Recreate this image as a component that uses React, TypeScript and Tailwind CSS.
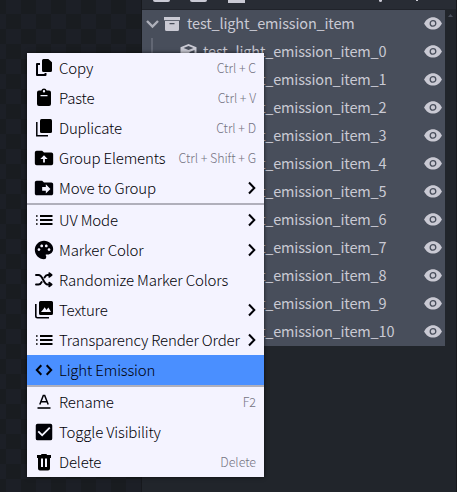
import type { ReactNode } from "react";
import { MdDriveFileMove, MdPalette, MdCheckBox } from "react-icons/md";

function CopyIcon() {
  return (
    <svg width="18" height="20" viewBox="0 0 18 20">
      <path d="M8.500 1h4.800L17 4.300v8.200a1.500 1.500 0 0 1-1.500 1.500h-7A1.500 1.500 0 0 1 7 12.500v-10A1.500 1.500 0 0 1 8.500 1z" />
      <path d="M5 6H2v11h8.500v-2" fill="none" stroke="currentColor" strokeWidth="2" strokeLinejoin="round" />
    </svg>
  );
}
function PasteIcon() {
  return (
    <svg width="18" height="20" viewBox="0 0 18 20">
      <path fillRule="evenodd" d="M6.300 2.500a2.800 2.800 0 0 1 5.400 0h2.300a2 2 0 0 1 2 2V16a2 2 0 0 1-2 2H4a2 2 0 0 1-2-2V4.500a2 2 0 0 1 2-2zM9 2a1.200 1.200 0 1 0 0 2.400A1.200 1.200 0 0 0 9 2zM5.500 7v1.300h7V7z" />
    </svg>
  );
}
function DuplicateIcon() {
  return (
    <svg width="18" height="20" viewBox="0 0 18 20">
      <rect x="5" y="1" width="12" height="14" rx="1.500" />
      <path d="M1.800 4v13.800H13" fill="none" stroke="currentColor" strokeWidth="1.500" />
    </svg>
  );
}
function FolderUpIcon() {
  return (
    <svg className="shrink-0" width="22" height="22" viewBox="0 0 24 24">
      <path fillRule="evenodd" d="M4 4h6l2 2h8a2 2 0 0 1 2 2v10a2 2 0 0 1-2 2H4a2 2 0 0 1-2-2V6a2 2 0 0 1 2-2zM12 9l-4 4h3v4h2v-4h3z" />
    </svg>
  );
}
function ListIcon() {
  return (
    <svg width="18" height="12" viewBox="0 0 18 12">
      <path d="M5 1h12.500v2H5zM5 5h12.500v2H5zM5 9h12.500v2H5zM1 1.200h1.600v1.600H1zM1 5.200h1.600v1.600H1zM1 9.200h1.600v1.600H1z" />
    </svg>
  );
}
function ShuffleIcon() {
  return (
    <svg width="18" height="18" viewBox="0 0 18 18" fill="none" stroke="currentColor" strokeWidth="1.900" strokeLinecap="round" strokeLinejoin="round">
      <path d="M1 4h2.500c4.500 0 5 9.500 9 9.500H16M1 13.500h2.500c1.500 0 2.500-1 3.200-2.500M9.500 6.500C10.300 5 11 4 12.500 4H16M14.300 2.200 16.600 4l-2.300 1.800M14.300 11.700l2.300 1.800-2.300 1.800" />
    </svg>
  );
}
function TextureIcon() {
  return (
    <svg className="shrink-0" width="20" height="20" viewBox="0 0 20 20">
      <path fillRule="evenodd" d="M6.500 1h11A1.500 1.500 0 0 1 19 2.500v11a1.500 1.500 0 0 1-1.500 1.500h-11A1.500 1.500 0 0 1 5 13.500v-11A1.500 1.500 0 0 1 6.500 1zM7 12h10l-2.600-4.500-2 2.500-1.700-2.700-1.400 2z" />
      <path d="M1.800 4v12a1.700 1.700 0 0 0 1.700 1.700H15" fill="none" stroke="currentColor" strokeWidth="1.600" />
    </svg>
  );
}
function CodeIcon() {
  return (
    <svg width="18" height="12" viewBox="0 0 18 12" fill="none" stroke="currentColor" strokeWidth="2">
      <path d="M6.300 1.200 1.800 6l4.500 4.800M11.700 1.200 16.200 6l-4.500 4.800" />
    </svg>
  );
}
function RenameIcon() {
  return (
    <svg width="14" height="16" viewBox="0 0 14 16" fill="none" stroke="currentColor">
      <path d="M2.800 10.500 6.300 1.500h1.400l3.500 9M4.300 7.800h5.400" strokeWidth="1.500" />
      <path d="M.5 14h13" strokeWidth="1.600" />
    </svg>
  );
}
function TrashIcon() {
  return (
    <svg width="16" height="18" viewBox="0 0 16 18">
      <path fillRule="evenodd" d="M5.500 1h5l.5 1h4v3h-1v10.500a2 2 0 0 1-2 2H4a2 2 0 0 1-2-2V5H1V2h4zM5 5.500v8.500h2V5.500zm4 0v8.500h2V5.500z" />
    </svg>
  );
}
function EyeIcon() {
  return (
    <svg className="mb-[2px] shrink-0" width="18" height="13" viewBox="0 0 18 13">
      <path fill="#cacad4" d="M9 .2c3.800 0 7 2.300 8.800 6.200C16 10.300 12.800 12.600 9 12.600S2 10.300.2 6.400C2 2.500 5.200.2 9 .2z" />
      <circle cx="9" cy="6.400" r="2.800" fill="none" stroke="#484e5b" strokeWidth="1.300" />
    </svg>
  );
}
function Arrow() {
  return (
    <svg className="shrink-0" width="8" height="14" viewBox="0 0 8 14" fill="none" stroke="currentColor" strokeWidth="2">
      <path d="M1 1.500 6.300 7 1 12.500" />
    </svg>
  );
}

function Row({ icon, label, hint, sub, active }: { icon: ReactNode; label: string; hint?: string; sub?: boolean; active?: boolean }) {
  return (
    <div className={`flex h-[30px] items-center whitespace-nowrap pr-2 pl-[7px] ${active ? "bg-[#4a8fff]" : ""}`}>
      <span className="mr-[5px] flex w-5 shrink-0 items-center justify-center">{icon}</span>
      <span className="flex-1 text-[15px] leading-[30px] font-light tracking-[-0.160px]">{label}</span>
      {hint && <span className="text-[12.500px] font-light tracking-[-0.060px] text-[#757482]">{hint}</span>}
      {sub && <Arrow />}
    </div>
  );
}

function TreeRow({ name, root }: { name: string; root?: boolean }) {
  return (
    <div className="flex h-7 items-center whitespace-nowrap bg-[#484e5b] pr-[3px]">
      {root ? (
        <div className="flex w-[45px] shrink-0 items-center">
          <svg className="ml-1" width="13" height="10" viewBox="0 0 13 10" fill="none" stroke="#aeb0ba" strokeWidth="2.400"><path d="m1 2 5.500 5.500L12 2" /></svg>
          <svg className="ml-[5px]" width="16" height="14" viewBox="0 0 16 14" fill="#cacad4"><path d="M0 0h16v3.200H0z" /><path fillRule="evenodd" d="M1 4h14v8.500a1.500 1.500 0 0 1-1.500 1.500h-11A1.500 1.500 0 0 1 1 12.500zm4.500 2v1.200h5V6z" /></svg>
        </div>
      ) : (
        <div className="flex h-7 w-[61px] shrink-0 items-center">
          <div className="ml-[9px] h-7 w-[2px] bg-[#626774]" />
          <svg className="ml-[27px]" width="17" height="17" viewBox="0 0 17 17"><path fill="#cacad4" fillRule="evenodd" d="m8.500 0 8 3.200v9.600l-8 3.700-8-3.700V3.200zM3.500 4l5 2 5-2-5-2zM9.500 8v6l5-2.300V6z" /></svg>
        </div>
      )}
      <span className="mb-[2px] flex-1 text-[14.500px] leading-[26px] tracking-[-0.160px] text-[#cacad4]">{name}</span>
      <EyeIcon />
    </div>
  );
}

export default function App() {
  return (
    <div className="relative flex h-[492px] w-[457px] overflow-hidden bg-[#21252b] font-['Noto_Sans_CJK_SC','Noto_Sans',sans-serif]">
      <div className="h-full w-[142px] shrink-0 border-r border-[#17191d] bg-[conic-gradient(#1c1f26_25%,#191c20_0_50%,#1c1f26_0_75%,#191c20_0)] bg-[length:30px_30px] bg-[position:6px_14px]" />
      <div className="h-full w-[303px] shrink-0">
        <div className="flex h-[10px] items-start border-b border-[#20232a] bg-[#282c34]">
          <div className="ml-[11px] h-[2px] w-[17px] rounded-b bg-[#cacad4]" />
          <div className="ml-5 h-[2px] w-[17px] rounded-b bg-[#cacad4]" />
          <div className="ml-[21px] h-[3px] w-[17px] bg-[#cacad4]" />
          <div className="ml-[134px] h-[2px] w-[3px] rounded-b bg-[#cacad4]" />
          <div className="ml-[34px] h-px w-[2px] bg-[#cacad4]" />
        </div>
        <TreeRow root name="test_light_emission_item" />
        {[0, 1, 2, 3, 4, 5, 6, 7, 8, 9, 10].map((n) => <TreeRow key={n} name={`test_light_emission_item_${n}`} />)}
      </div>
      <div className="flex w-3 flex-col border-r border-[#17191d]">
        <div className="h-[9px] bg-[#282c34]" />
        <svg className="mt-[5px] ml-[3px]" width="5" height="3" viewBox="0 0 5 3" fill="#4b505c"><path d="M0 3 2.500 0 5 3z" /></svg>
      </div>
      <div className="absolute top-[53px] left-[27px] w-[237px] bg-[#f4f3ff] text-[#000006] shadow-[0_0_4px_rgba(0,0,0,0.7)]">
        <Row icon={<CopyIcon />} label="Copy" hint="Ctrl + C" />
        <Row icon={<PasteIcon />} label="Paste" hint="Ctrl + V" />
        <Row icon={<DuplicateIcon />} label="Duplicate" hint="Ctrl + D" />
        <Row icon={<FolderUpIcon />} label="Group Elements" hint="Ctrl + Shift + G" />
        <Row icon={<MdDriveFileMove size={22} className="shrink-0" />} label="Move to Group" sub />
        <div className="h-[2px] bg-[#b0afbb]" />
        <Row icon={<ListIcon />} label="UV Mode" sub />
        <Row icon={<MdPalette size={22} className="shrink-0" />} label="Marker Color" sub />
        <Row icon={<ShuffleIcon />} label="Randomize Marker Colors" />
        <Row icon={<TextureIcon />} label="Texture" sub />
        <Row icon={<ListIcon />} label="Transparency Render Order" sub />
        <Row active icon={<CodeIcon />} label="Light Emission" />
        <div className="h-[2px] bg-[#b0afbb]" />
        <Row icon={<RenameIcon />} label="Rename" hint="F2" />
        <Row icon={<MdCheckBox size={22} className="shrink-0" />} label="Toggle Visibility" />
        <Row icon={<TrashIcon />} label="Delete" hint="Delete" />
      </div>
    </div>
  );
}
